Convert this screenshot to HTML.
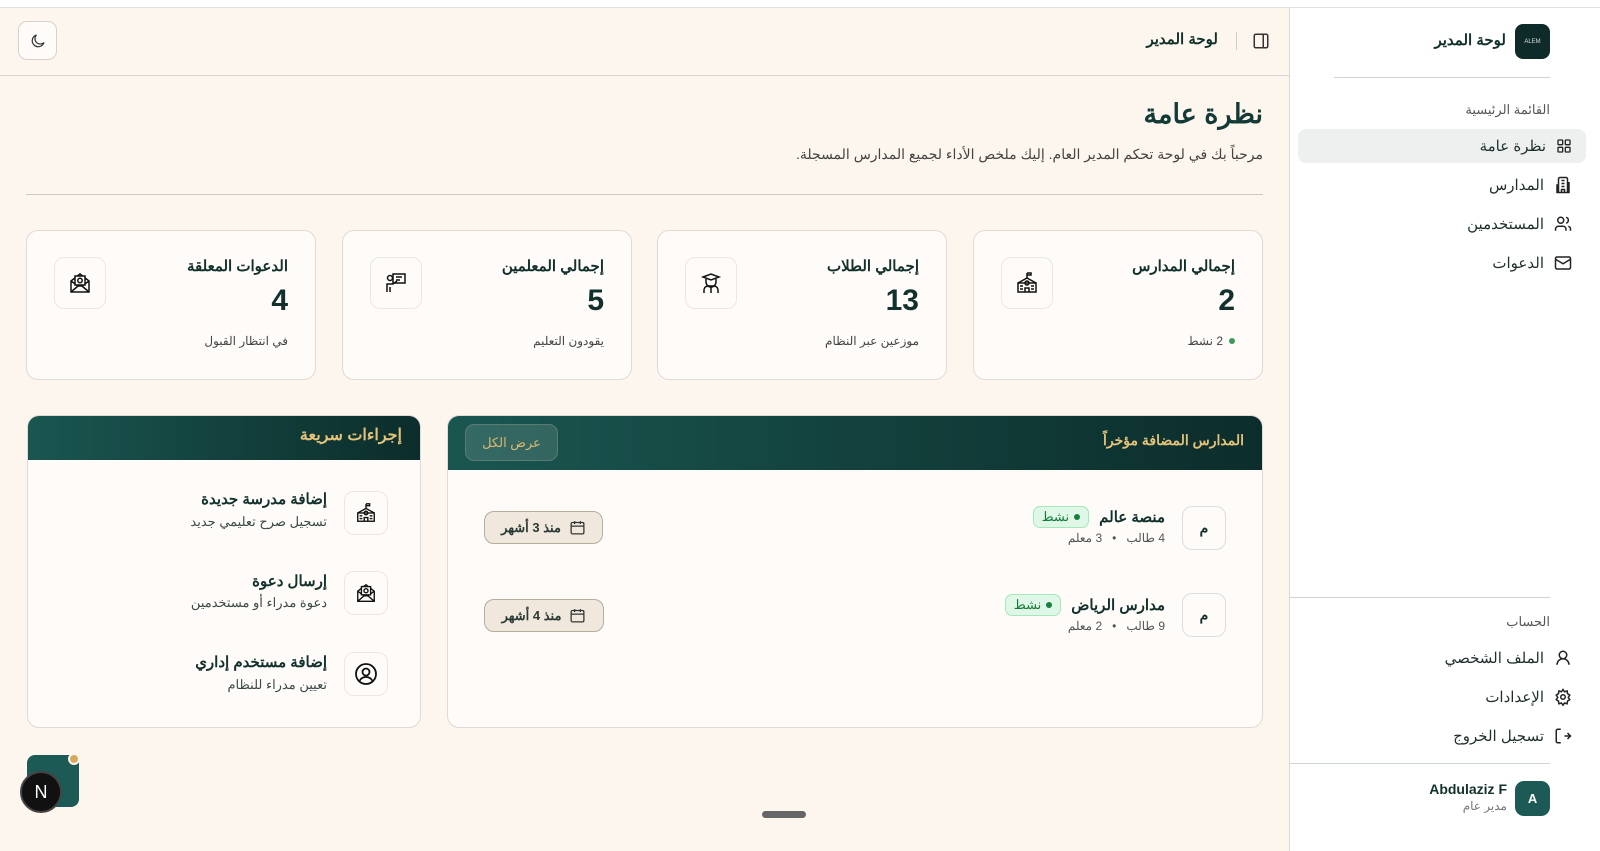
<!DOCTYPE html>
<html lang="ar" dir="rtl"><head><meta charset="utf-8">
<style>
*{box-sizing:border-box;margin:0;padding:0}
body{width:1600px;height:851px;overflow:hidden;background:#fff;font-family:"Liberation Sans","Noto Sans CJK SC",sans-serif;color:#12312d;position:relative}
.a{position:absolute}
.main{left:0;top:7px;width:1290px;height:844px;background:#fdf6ee;border-top:1px solid #e4e2de;border-right:1px solid #ddd9d2}
.side{left:1290px;top:7px;width:310px;height:844px;background:#fff;border-top:1px solid #e4e2de}
.card{background:#fefbf8;border:1px solid #dedad4;border-radius:12px}
.ib{background:#fefbf8;border:1px solid #ebe7e1;border-radius:10px;display:flex;align-items:center;justify-content:center}
.t{white-space:nowrap}
.nav{right:14px;width:288px;height:34px;display:flex;align-items:center;gap:10px;padding-right:14px;font-size:15px;color:#1e2f2d}
.pill{background:#f0e8dc;border:1px solid #b8ac9a;border-radius:10px;display:flex;align-items:center;justify-content:center;gap:8px;font-size:13px;font-weight:bold;color:#2b3a36}
.badge{background:#dff7e6;border:1px solid #a6e6bb;border-radius:7px;font-size:13px;color:#187a3a;padding:2px 8px;display:flex;align-items:center;gap:5px}
.dot{width:6px;height:6px;border-radius:50%;background:#17803d;display:inline-block}
</style></head><body>
<svg width="0" height="0" style="position:absolute">
<defs>
<symbol id="school" viewBox="0 0 24 24"><g fill="none" stroke="#111" stroke-width="1.5"><path d="M12 2v5M12 2h4v2h-4"/><path d="M3 12l9-5 9 5"/><rect x="3" y="12" width="18" height="9"/><circle cx="12" cy="12" r="2"/><path d="M10 21v-4h4v4M5 15h3M5 18h3M16 15h3M16 18h3"/></g></symbol>
<symbol id="mail" viewBox="0 0 24 24"><g fill="none" stroke="#111" stroke-width="1.5"><path d="M3 10l9-7 9 7v11H3z"/><path d="M3 21l7-6M21 21l-7-6M3 10l7 5h4l7-5"/><rect x="7" y="5" width="10" height="9" fill="#fefbf8"/><circle cx="12" cy="9.5" r="2.2"/></g></symbol>
<symbol id="teach" viewBox="0 0 24 24"><g fill="none" stroke="#111" stroke-width="1.5"><rect x="9" y="3" width="12" height="9"/><circle cx="6" cy="7" r="2.5"/><path d="M3 21v-8h6l4-3M6 21v-5"/><path d="M12 6h6M12 9h4"/></g></symbol>
<symbol id="stud" viewBox="0 0 24 24"><g fill="none" stroke="#111" stroke-width="1.5"><path d="M4 6l8-3 8 3-8 3z"/><path d="M7 8v3a5 5 0 0 0 10 0V8"/><path d="M5 22v-3a4 4 0 0 1 4-4h6a4 4 0 0 1 4 4v3M12 15v7"/></g></symbol>
</defs></svg>
<div class="a main"></div>
<div class="a side"></div>
<div class="a" style="left:0;top:75px;width:1290px;height:1px;background:#d9d6d0"></div>
<div class="a ib" style="left:18px;top:21px;width:39px;height:39px;border-color:#d6d2cb;border-radius:9px"><svg width="18" height="18" viewBox="0 0 24 24" fill="none" stroke="#333" stroke-width="1.6"><path d="M20 14A8 8 0 1 1 10 4a6 6 0 0 0 10 10z"/></svg></div>
<div class="a t" style="right:382px;top:30px;font-size:15px;font-weight:bold">لوحة المدير</div>
<div class="a" style="left:1236px;top:32px;width:1px;height:18px;background:#ccc"></div>
<svg class="a" style="left:1252px;top:32px" width="18" height="18" viewBox="0 0 24 24" fill="none" stroke="#333" stroke-width="2"><rect x="3" y="3" width="18" height="18" rx="2"/><path d="M15 3v18"/></svg>
<div class="a t" style="right:337px;top:99px;font-size:27px;font-weight:bold;color:#133a36">نظرة عامة</div>
<div class="a t" style="right:337px;top:146px;font-size:14px;color:#444">مرحباً بك في لوحة تحكم المدير العام. إليك ملخص الأداء لجميع المدارس المسجلة.</div>
<div class="a" style="left:26px;top:194px;width:1237px;height:1px;background:#cfcac2"></div>
<div class="a card" style="left:973px;top:230px;width:290px;height:150px"></div>
<div class="a card" style="left:657px;top:230px;width:290px;height:150px"></div>
<div class="a card" style="left:342px;top:230px;width:290px;height:150px"></div>
<div class="a card" style="left:26px;top:230px;width:290px;height:150px"></div>
<div class="a ib" style="left:1001px;top:257px;width:52px;height:52px"><svg width="24" height="24"><use href="#school"/></svg></div>
<div class="a ib" style="left:685px;top:257px;width:52px;height:52px"><svg width="24" height="24"><use href="#stud"/></svg></div>
<div class="a ib" style="left:370px;top:257px;width:52px;height:52px"><svg width="24" height="24"><use href="#teach"/></svg></div>
<div class="a ib" style="left:54px;top:257px;width:52px;height:52px"><svg width="24" height="24"><use href="#mail"/></svg></div>
<div class="a t" style="right:365px;top:257px;font-size:15px;font-weight:bold">إجمالي المدارس</div>
<div class="a t" style="right:681px;top:257px;font-size:15px;font-weight:bold">إجمالي الطلاب</div>
<div class="a t" style="right:996px;top:257px;font-size:15px;font-weight:bold">إجمالي المعلمين</div>
<div class="a t" style="right:1312px;top:257px;font-size:15px;font-weight:bold">الدعوات المعلقة</div>
<div class="a t" style="right:365px;top:284px;font-size:30px;font-weight:bold">2</div>
<div class="a t" style="right:681px;top:284px;font-size:30px;font-weight:bold">13</div>
<div class="a t" style="right:996px;top:284px;font-size:30px;font-weight:bold">5</div>
<div class="a t" style="right:1312px;top:284px;font-size:30px;font-weight:bold">4</div>
<div class="a t" style="right:365px;top:334px;font-size:12px;color:#444;display:flex;align-items:center;gap:6px"><span class="dot" style="background:#3c9a5a"></span>2 نشط</div>
<div class="a t" style="right:681px;top:334px;font-size:12px;color:#444">موزعين عبر النظام</div>
<div class="a t" style="right:996px;top:334px;font-size:12px;color:#444">يقودون التعليم</div>
<div class="a t" style="right:1312px;top:334px;font-size:12px;color:#444">في انتظار القبول</div>
<div class="a card" style="left:447px;top:415px;width:816px;height:313px;overflow:hidden">
<div style="height:54px;background:linear-gradient(270deg,#0c2d2b,#1a5650);"></div></div>
<div class="a t" style="right:356px;top:432px;font-size:14px;font-weight:bold;color:#e3c27a">المدارس المضافة مؤخراً</div>
<div class="a" style="left:465px;top:424px;width:93px;height:37px;border:1px solid #5b7b72;background:rgba(255,255,255,.12);border-radius:9px;color:#d9b96f;font-size:13px;display:flex;align-items:center;justify-content:center">عرض الكل</div>
<div class="a ib" style="left:1182px;top:506px;width:44px;height:44px;font-size:14px;font-weight:bold;border-color:#ddd">م</div>
<div class="a ib" style="left:1182px;top:593px;width:44px;height:44px;font-size:14px;font-weight:bold;border-color:#ddd">م</div>
<div class="a t" style="right:435px;top:506px;display:flex;gap:10px;align-items:center"><span style="font-size:15px;font-weight:bold">منصة عالم</span><span class="badge"><span class="dot"></span>نشط</span></div>
<div class="a t" style="right:435px;top:531px;font-size:12px;color:#555">4 طالب &nbsp; • &nbsp; 3 معلم</div>
<div class="a t" style="right:435px;top:594px;display:flex;gap:10px;align-items:center"><span style="font-size:15px;font-weight:bold">مدارس الرياض</span><span class="badge"><span class="dot"></span>نشط</span></div>
<div class="a t" style="right:435px;top:619px;font-size:12px;color:#555">9 طالب &nbsp; • &nbsp; 2 معلم</div>
<div class="a pill" style="left:484px;top:511px;width:119px;height:33px"><svg width="17" height="17" viewBox="0 0 24 24" fill="none" stroke="#333" stroke-width="1.8"><rect x="3" y="5" width="18" height="16" rx="2"/><path d="M3 10h18M8 3v4M16 3v4"/></svg>منذ 3 أشهر</div>
<div class="a pill" style="left:484px;top:599px;width:120px;height:33px"><svg width="17" height="17" viewBox="0 0 24 24" fill="none" stroke="#333" stroke-width="1.8"><rect x="3" y="5" width="18" height="16" rx="2"/><path d="M3 10h18M8 3v4M16 3v4"/></svg>منذ 4 أشهر</div>
<div class="a card" style="left:27px;top:415px;width:394px;height:313px;overflow:hidden">
<div style="height:44px;background:linear-gradient(270deg,#0c2d2b,#1a5650);"></div></div>
<div class="a t" style="right:1198px;top:425px;font-size:16px;font-weight:bold;color:#e3c27a">إجراءات سريعة</div>
<div class="a ib" style="left:344px;top:491px;width:44px;height:44px"><svg width="22" height="22"><use href="#school"/></svg></div>
<div class="a ib" style="left:344px;top:571px;width:44px;height:44px"><svg width="22" height="22"><use href="#mail"/></svg></div>
<div class="a ib" style="left:344px;top:652px;width:44px;height:44px"><svg width="24" height="24" viewBox="0 0 24 24" fill="none" stroke="#111" stroke-width="1.8"><circle cx="12" cy="12" r="10"/><circle cx="12" cy="10" r="3.5"/><path d="M5.5 19c1.5-3 4-4 6.5-4s5 1 6.5 4"/></svg></div>
<div class="a t" style="right:1273px;top:490px;font-size:15px;font-weight:bold">إضافة مدرسة جديدة</div>
<div class="a t" style="right:1273px;top:514px;font-size:13px;color:#3a4a48">تسجيل صرح تعليمي جديد</div>
<div class="a t" style="right:1273px;top:572px;font-size:15px;font-weight:bold">إرسال دعوة</div>
<div class="a t" style="right:1273px;top:595px;font-size:13px;color:#3a4a48">دعوة مدراء أو مستخدمين</div>
<div class="a t" style="right:1273px;top:653px;font-size:15px;font-weight:bold">إضافة مستخدم إداري</div>
<div class="a t" style="right:1273px;top:677px;font-size:13px;color:#3a4a48">تعيين مدراء للنظام</div>
<div class="a" style="left:27px;top:755px;width:52px;height:52px;background:#1c5a55;border-radius:8px"></div>
<div class="a" style="left:68px;top:753px;width:12px;height:12px;background:#d6a960;border-radius:50%;border:2px solid #fdf6ee"></div>
<div class="a" style="left:20px;top:771px;width:42px;height:42px;background:#111;border-radius:50%;border:2px solid #444;color:#fff;font-size:18px;display:flex;align-items:center;justify-content:center">N</div>
<div class="a" style="left:762px;top:811px;width:44px;height:7px;background:#666;border-radius:4px"></div>
<div class="a" style="left:1515px;top:24px;width:35px;height:35px;background:#0f2b29;border-radius:8px;color:#ddd;font-size:6px;display:flex;align-items:center;justify-content:center">ALEM</div>
<div class="a t" style="right:94px;top:31px;font-size:15px;font-weight:bold">لوحة المدير</div>
<div class="a" style="left:1334px;top:77px;width:216px;height:1px;background:#cfd4d4"></div>
<div class="a t" style="right:50px;top:102px;font-size:13px;color:#555">القائمة الرئيسية</div>
<div class="a nav" style="top:129px;background:#edf0ef;border-radius:8px"><svg width="16" height="16" viewBox="0 0 24 24" fill="none" stroke="#222" stroke-width="2"><rect x="3" y="3" width="7" height="7" rx="1"/><rect x="14" y="3" width="7" height="7" rx="1"/><rect x="3" y="14" width="7" height="7" rx="1"/><rect x="14" y="14" width="7" height="7" rx="1"/></svg>نظرة عامة</div>
<div class="a nav" style="top:168px"><svg width="18" height="18" viewBox="0 0 24 24" fill="none" stroke="#222" stroke-width="2"><path d="M6 22V4a2 2 0 0 1 2-2h8a2 2 0 0 1 2 2v18zM6 12H4v10h2M18 9h2v13h-2M10 6h4M10 10h4M10 14h4M10 22v-4h4v4"/></svg>المدارس</div>
<div class="a nav" style="top:207px"><svg width="18" height="18" viewBox="0 0 24 24" fill="none" stroke="#222" stroke-width="2"><circle cx="9" cy="7" r="4"/><path d="M2 21v-2a4 4 0 0 1 4-4h6a4 4 0 0 1 4 4v2M16 3.1a4 4 0 0 1 0 7.8M22 21v-2a4 4 0 0 0-3-3.9"/></svg>المستخدمين</div>
<div class="a nav" style="top:246px"><svg width="18" height="18" viewBox="0 0 24 24" fill="none" stroke="#222" stroke-width="2"><rect x="2" y="4" width="20" height="16" rx="2"/><path d="m22 7-10 6L2 7"/></svg>الدعوات</div>
<div class="a" style="left:1290px;top:597px;width:260px;height:1px;background:#cfd4d4"></div>
<div class="a t" style="right:50px;top:614px;font-size:13px;color:#555">الحساب</div>
<div class="a nav" style="top:641px"><svg width="18" height="18" viewBox="0 0 24 24" fill="none" stroke="#222" stroke-width="2"><circle cx="12" cy="8" r="5"/><path d="M20 21a8 8 0 0 0-16 0"/></svg>الملف الشخصي</div>
<div class="a nav" style="top:680px"><svg width="18" height="18" viewBox="0 0 24 24" fill="none" stroke="#222" stroke-width="2"><circle cx="12" cy="12" r="3"/><path d="M12 2l2 3 3.5-1 .5 3.5 3 2-2 3 2 3-3 2-.5 3.5-3.5-1-2 3-2-3-3.5 1-.5-3.5-3-2 2-3-2-3 3-2 .5-3.5 3.5 1z"/></svg>الإعدادات</div>
<div class="a nav" style="top:719px"><svg width="18" height="18" viewBox="0 0 24 24" fill="none" stroke="#222" stroke-width="2"><path d="M9 3H5a2 2 0 0 0-2 2v14a2 2 0 0 0 2 2h4M14 12H21M18 8l4 4-4 4"/></svg>تسجيل الخروج</div>
<div class="a" style="left:1290px;top:763px;width:260px;height:1px;background:#cfd4d4"></div>
<div class="a" style="left:1515px;top:781px;width:35px;height:35px;background:#1e5a55;border-radius:9px;color:#fff;font-size:13px;font-weight:bold;display:flex;align-items:center;justify-content:center">A</div>
<div class="a t" style="right:93px;top:781px;font-size:14px;font-weight:bold;direction:ltr">Abdulaziz F</div>
<div class="a t" style="right:93px;top:799px;font-size:12px;color:#777">مدير عام</div>
</body></html>
